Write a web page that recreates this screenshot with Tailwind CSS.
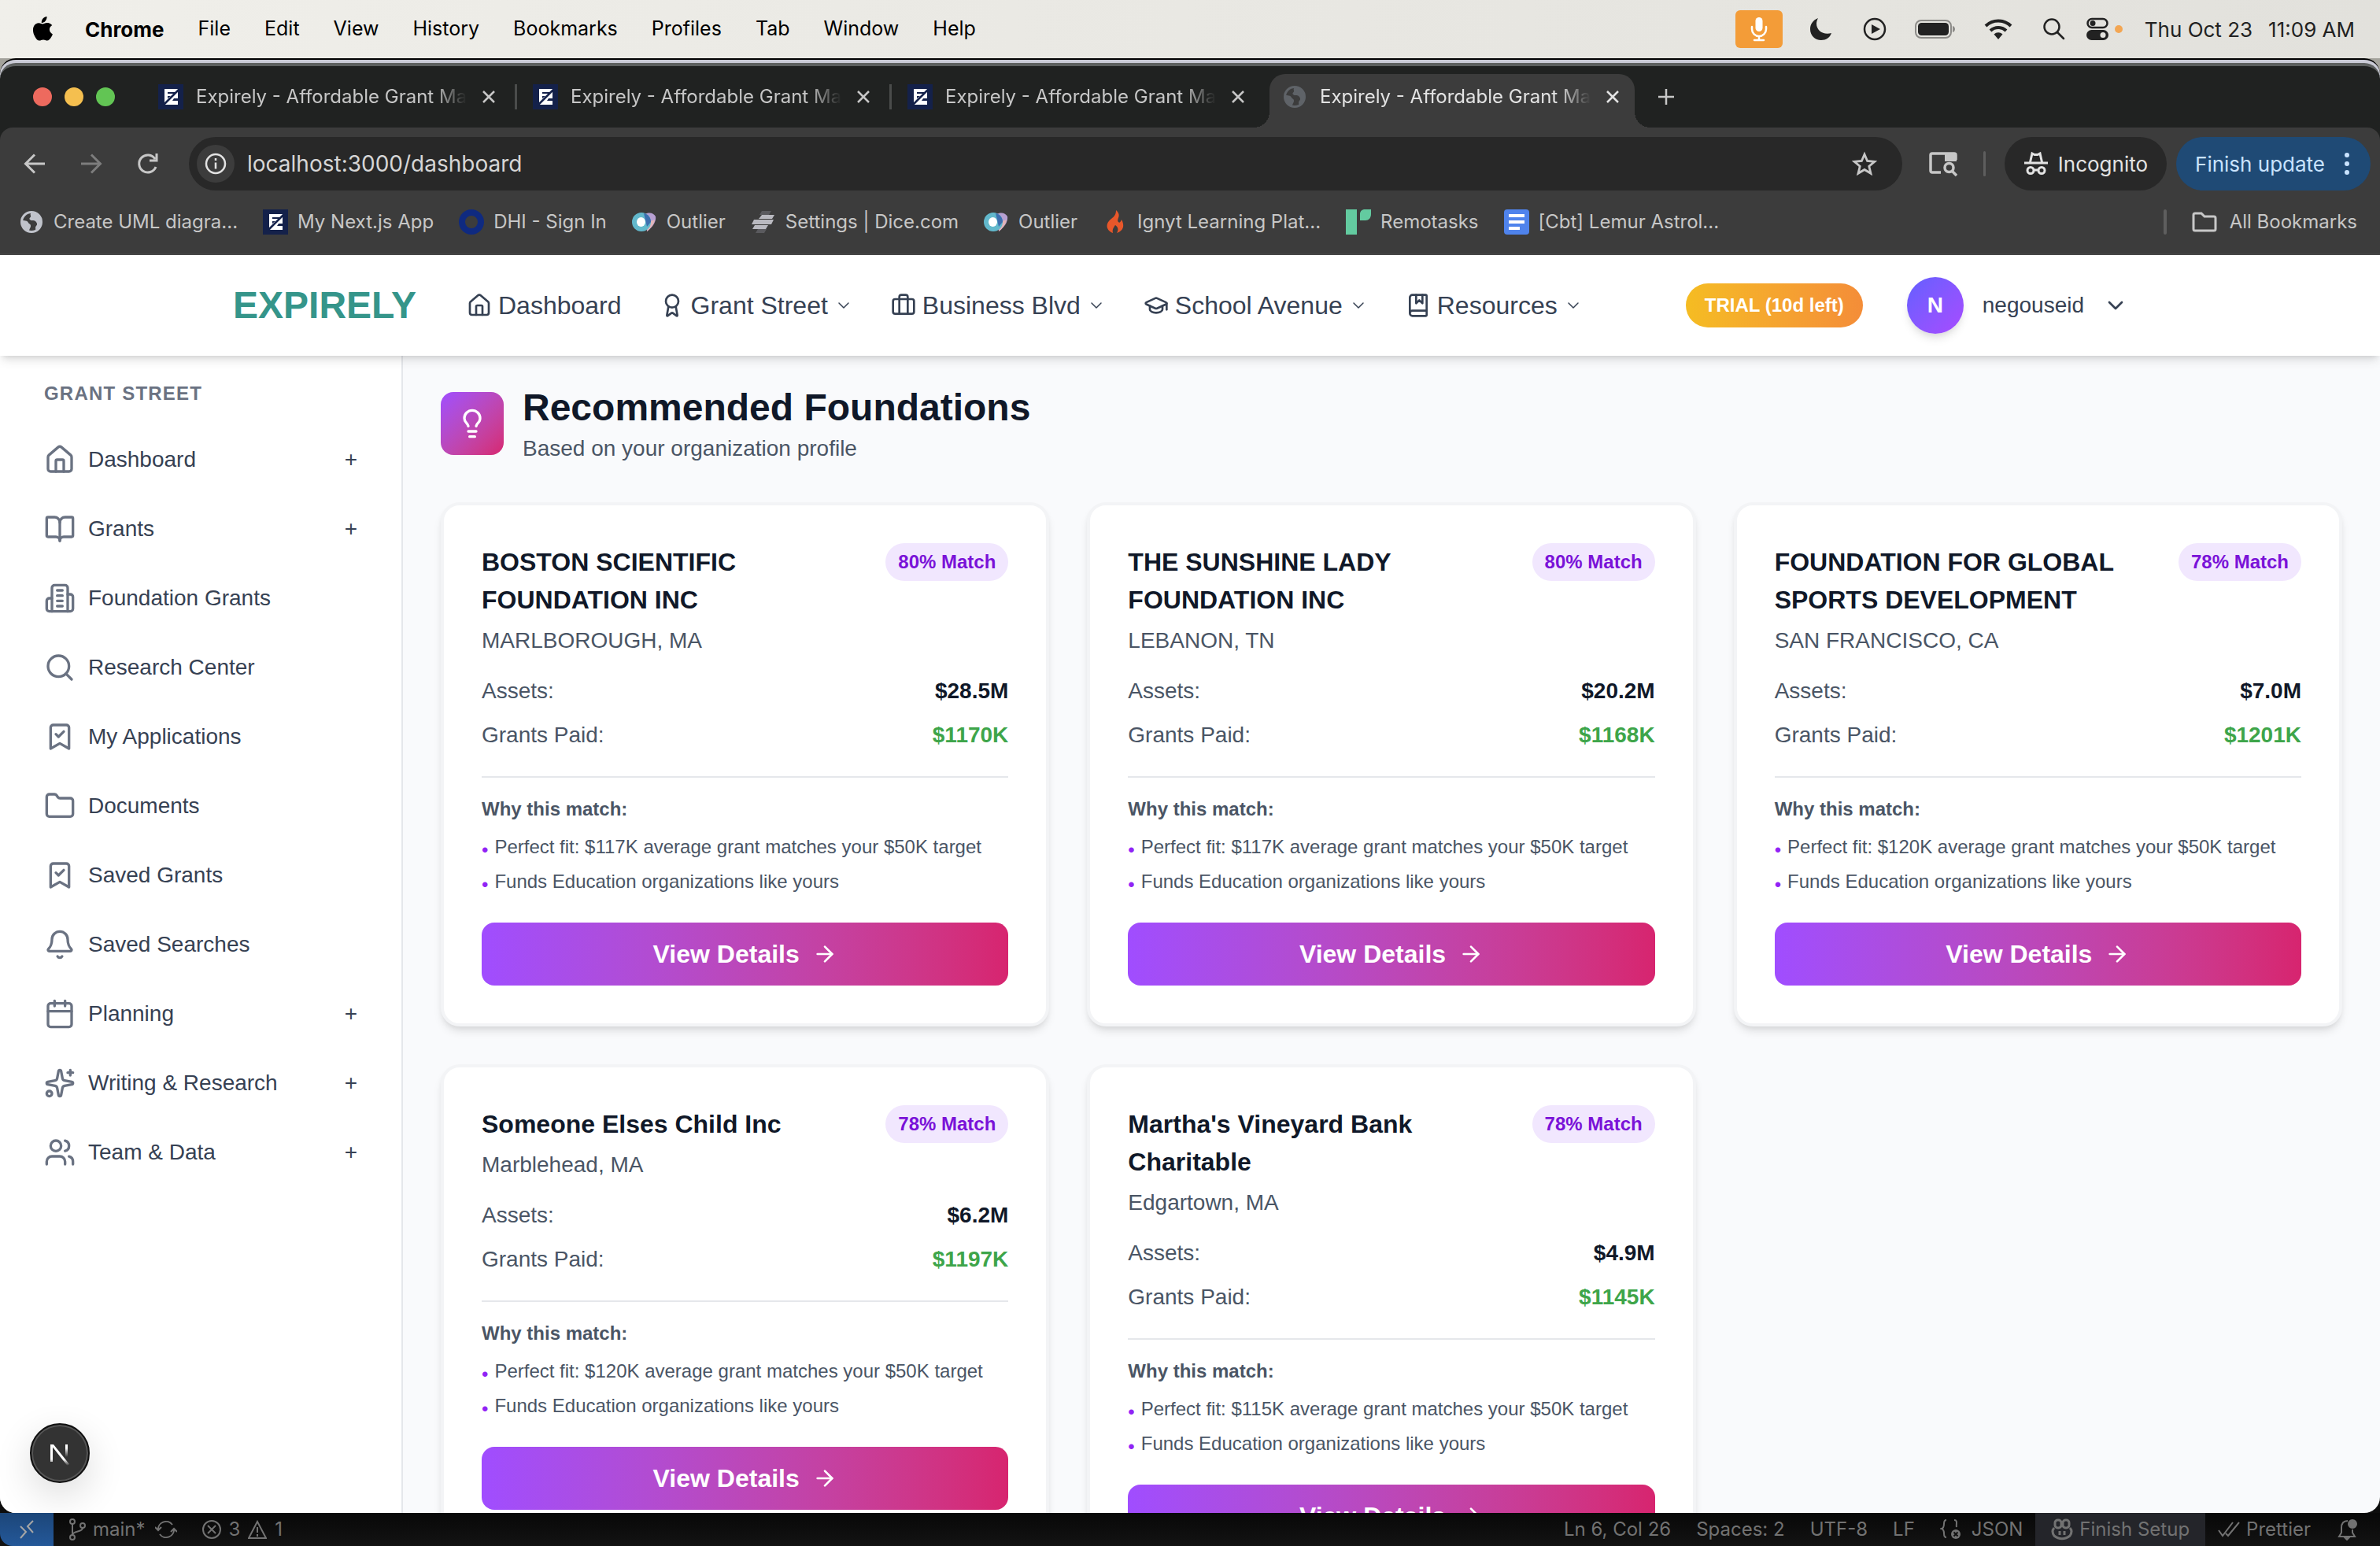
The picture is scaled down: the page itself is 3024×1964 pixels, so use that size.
<!DOCTYPE html>
<html lang="en">
<head>
  <meta charset="UTF-8" />
  <meta name="viewport" content="width=device-width, initial-scale=1.0" />
  <title>Expirely - Affordable Grant Management</title>
  <script src="https://cdn.jsdelivr.net/npm/@tailwindcss/browser@4"></script>
</head>
<body class="h-screen overflow-hidden flex flex-col bg-[#0d0d0d] font-['Liberation_Sans',Arial,sans-serif]">

  <!-- Icon sprite -->
  <svg class="hidden">
    <symbol id="house" viewBox="0 0 24 24"><path d="M15 21v-8a1 1 0 0 0-1-1h-4a1 1 0 0 0-1 1v8"/><path d="M3 10a2 2 0 0 1 .709-1.528l7-5.999a2 2 0 0 1 2.582 0l7 5.999A2 2 0 0 1 21 10v9a2 2 0 0 1-2 2H5a2 2 0 0 1-2-2z"/></symbol>
    <symbol id="book-open" viewBox="0 0 24 24"><path d="M12 7v14"/><path d="M3 18a1 1 0 0 1-1-1V4a1 1 0 0 1 1-1h5a4 4 0 0 1 4 4 4 4 0 0 1 4-4h5a1 1 0 0 1 1 1v13a1 1 0 0 1-1 1h-6a3 3 0 0 0-3 3 3 3 0 0 0-3-3z"/></symbol>
    <symbol id="building" viewBox="0 0 24 24"><path d="M6 22V4a2 2 0 0 1 2-2h8a2 2 0 0 1 2 2v18Z"/><path d="M6 12H4a2 2 0 0 0-2 2v6a2 2 0 0 0 2 2h2"/><path d="M18 9h2a2 2 0 0 1 2 2v9a2 2 0 0 1-2 2h-2"/><path d="M10 6h4M10 10h4M10 14h4M10 18h4"/></symbol>
    <symbol id="search" viewBox="0 0 24 24"><circle cx="11" cy="11" r="8"/><path d="m21 21-4.3-4.3"/></symbol>
    <symbol id="bookmark-check" viewBox="0 0 24 24"><path d="m19 21-7-4-7 4V5a2 2 0 0 1 2-2h10a2 2 0 0 1 2 2Z"/><path d="m9 10 2 2 4-4"/></symbol>
    <symbol id="folder" viewBox="0 0 24 24"><path d="M20 20a2 2 0 0 0 2-2V8a2 2 0 0 0-2-2h-7.9a2 2 0 0 1-1.69-.9L9.6 3.9A2 2 0 0 0 7.93 3H4a2 2 0 0 0-2 2v13a2 2 0 0 0 2 2Z"/></symbol>
    <symbol id="bell" viewBox="0 0 24 24"><path d="M10.268 21a2 2 0 0 0 3.464 0"/><path d="M3.262 15.326A1 1 0 0 0 4 17h16a1 1 0 0 0 .74-1.673C19.41 13.956 18 12.499 18 8A6 6 0 0 0 6 8c0 4.499-1.411 5.956-2.738 7.326"/></symbol>
    <symbol id="calendar" viewBox="0 0 24 24"><path d="M8 2v4M16 2v4M3 10h18"/><rect x="3" y="4" width="18" height="18" rx="2"/></symbol>
    <symbol id="sparkles" viewBox="0 0 24 24"><path d="M11.017 2.814a1 1 0 0 1 1.966 0l1.051 5.558a2 2 0 0 0 1.594 1.594l5.558 1.051a1 1 0 0 1 0 1.966l-5.558 1.051a2 2 0 0 0-1.594 1.594l-1.051 5.558a1 1 0 0 1-1.966 0l-1.051-5.558a2 2 0 0 0-1.594-1.594l-5.558-1.051a1 1 0 0 1 0-1.966l5.558-1.051a2 2 0 0 0 1.594-1.594z"/><path d="M20 2v4M22 4h-4"/><circle cx="4" cy="20" r="2"/></symbol>
    <symbol id="users" viewBox="0 0 24 24"><path d="M16 21v-2a4 4 0 0 0-4-4H6a4 4 0 0 0-4 4v2"/><circle cx="9" cy="7" r="4"/><path d="M22 21v-2a4 4 0 0 0-3-3.87M16 3.13a4 4 0 0 1 0 7.75"/></symbol>
    <symbol id="award" viewBox="0 0 24 24"><path d="m15.477 12.89 1.515 8.526a.5.5 0 0 1-.81.47l-3.58-2.687a1 1 0 0 0-1.197 0l-3.586 2.686a.5.5 0 0 1-.81-.469l1.514-8.526"/><circle cx="12" cy="8" r="6"/></symbol>
    <symbol id="briefcase" viewBox="0 0 24 24"><path d="M16 20V4a2 2 0 0 0-2-2h-4a2 2 0 0 0-2 2v16"/><rect x="2" y="6" width="20" height="14" rx="2"/></symbol>
    <symbol id="graduation" viewBox="0 0 24 24"><path d="M21.42 10.922a1 1 0 0 0-.019-1.838L12.83 5.18a2 2 0 0 0-1.66 0L2.6 9.08a1 1 0 0 0 0 1.832l8.57 3.908a2 2 0 0 0 1.66 0z"/><path d="M22 10v6"/><path d="M6 12.5V16a6 3 0 0 0 12 0v-3.5"/></symbol>
    <symbol id="book-marked" viewBox="0 0 24 24"><path d="M10 2v8l3-3 3 3V2"/><path d="M4 19.5v-15A2.5 2.5 0 0 1 6.5 2H19a1 1 0 0 1 1 1v18a1 1 0 0 1-1 1H6.5a1 1 0 0 1 0-5H20"/></symbol>
    <symbol id="lightbulb" viewBox="0 0 24 24"><path d="M15 14c.2-1 .7-1.7 1.5-2.5 1-.9 1.5-2.2 1.5-3.5A6 6 0 0 0 6 8c0 1 .2 2.2 1.5 3.5.7.7 1.3 1.5 1.5 2.5"/><path d="M9 18h6M10 22h4"/></symbol>
    <symbol id="arrow-right" viewBox="0 0 24 24"><path d="M5 12h14"/><path d="m12 5 7 7-7 7"/></symbol>
    <symbol id="chevron" viewBox="0 0 24 24"><path d="m6 9 6 6 6-6"/></symbol>
    <symbol id="close" viewBox="0 0 24 24"><path d="m5 5 14 14M19 5 5 19"/></symbol>
    <symbol id="expirely" viewBox="0 0 32 32"><path fill="#14214a" stroke="none" d="M0 0h32v32H0z"/><path fill="#fff" stroke="none" d="M8 6h17v20H8z"/><path fill="#14214a" stroke="none" d="M12 10h10l-2 2h-8zM12 15h4l-4 3zM20 18h5v3h-7z"/><path stroke="#14214a" stroke-width="2.500" d="M7 26 26 7"/></symbol>
    <symbol id="globe" viewBox="0 0 32 32"><circle cx="16" cy="16" r="12.500" fill="none" stroke="currentColor" stroke-width="3"/><path fill="currentColor" stroke="none" d="M3 14c4 0 8 0 9 3 1 2 3 1 3 4s-2 3-2 8C7 28 3 22 3 14zM18 3c-3 1-4 3-3 5s-3 3-1 5 5 0 7 2 3 4 1 6 0 4-1 6c6-2 8-7 8-11S25 4 18 3z"/></symbol>
    <symbol id="outlier" viewBox="0 0 32 32"><path fill="#b7a0d2" d="M17 6c5-3 11-1 13 3 1 6-3 13-11 19z"/><path fill="#e2b5b8" d="M29 13c-1 6-5 11-10 15l2-12z"/><ellipse cx="12" cy="16" rx="12" ry="12" fill="#62b8cc"/><path fill="#3d6fb0" d="M15 5c5 1 9 5 9 11l-5 6z"/><ellipse cx="11.500" cy="16" rx="5.500" ry="6" fill="#fff"/></symbol>
  </svg>

  <!-- System menu bar -->
  <div class="h-[74px] shrink-0 flex items-center justify-between pl-10 pr-8 bg-linear-to-r from-[#f0efea] to-[#e2e1dc] text-[25px] text-black font-[Inter,sans-serif]">
    <div class="flex items-center gap-[43px]">
      <div class="flex items-center gap-10">
        <svg class="w-[28px] h-[34px]" viewBox="0 0 28 34" fill="black"><path d="M19.500 1c.3 2.200-.6 4.200-1.900 5.700-1.200 1.400-3 2.400-4.800 2.200-.3-2 .7-4.100 1.800-5.400C15.900 2 17.900 1.100 19.500 1zM26.300 12c-2.300 1.400-3.500 3.200-3.400 5.600.1 2.800 1.700 4.700 4 5.800-.5 1.600-1.300 3-2.200 4.400-1.300 1.900-2.600 3.700-4.700 3.800-2 0-2.700-1.200-5-1.200-2.400 0-3.100 1.200-5 1.200-2.100.1-3.600-2-4.900-3.900C2.400 23.900.6 17.100 3.300 12.800c1.200-2.200 3.500-3.600 6-3.600 2 0 3.800 1.300 5 1.300 1.100 0 3.400-1.600 5.800-1.400 1 0 3.900.4 6.200 2.900z"/></svg>
        <span class="text-[26px] font-bold">Chrome</span>
      </div>
      <span>File</span><span>Edit</span><span>View</span><span>History</span><span>Bookmarks</span><span>Profiles</span><span>Tab</span><span>Window</span><span>Help</span>
    </div>
    <div class="flex items-center text-[#222]">
      <div class="w-[60px] h-12 mr-[34px] rounded-md bg-[#f39c38] flex items-center justify-center">
        <svg class="w-8 h-8" viewBox="0 0 32 32" fill="none" stroke="white" stroke-width="2.500" stroke-linecap="round"><rect x="11.500" y="1" width="9" height="18" rx="4.500" fill="white" stroke="none"/><path d="M7 13v3a9 9 0 0 0 18 0v-3M16 25v5M10 30h12"/></svg>
      </div>
      <svg class="w-[30px] h-[30px] mr-[38px]" viewBox="0 0 30 30" fill="currentColor"><path d="M11 1C4 4 1 9 1 15c0 8 6 14 14 14 6 0 11-3 13-9-10 3-19-3-19-12 0-3 1-5 2-7z"/></svg>
      <svg class="w-[30px] h-[30px] mr-9" viewBox="0 0 30 30" fill="none" stroke="currentColor" stroke-width="2.500"><circle cx="15" cy="15" r="13"/><path fill="currentColor" stroke="none" d="M11 9v12l11-6z"/></svg>
      <svg class="w-[52px] h-6 mr-9" viewBox="0 0 52 24" fill="none"><rect x="1" y="1" width="45" height="22" rx="7" stroke="#8c8b88" stroke-width="2"/><rect x="4" y="4" width="39" height="16" rx="4.500" fill="#222"/><path fill="#8c8b88" d="M48 8c4 1 4 7 0 8z"/></svg>
      <svg class="w-[36px] h-[28px] mr-[38px]" viewBox="0 0 36 28" fill="none" stroke="currentColor" stroke-width="4"><path d="M2 10a23 23 0 0 1 32 0M8 16a14.500 14.500 0 0 1 20 0"/><path fill="currentColor" stroke="none" d="M12.500 20.500a8 8 0 0 1 11 0L18 27z"/></svg>
      <svg class="w-[30px] h-[30px] mr-[26px]" viewBox="0 0 30 30" fill="none" stroke="currentColor" stroke-width="2.500" stroke-linecap="round"><circle cx="12" cy="12" r="9.500"/><path d="m19 19 8 8"/></svg>
      <svg class="w-[28px] h-[30px] mr-2" viewBox="0 0 28 30"><rect x="1.500" y="2" width="25" height="11" rx="5.500" fill="none" stroke="currentColor" stroke-width="2.500"/><circle cx="8" cy="7.500" r="3.500" fill="currentColor"/><rect y="16" width="28" height="13" rx="6.500" fill="currentColor"/><circle cx="21" cy="22.500" r="3.500" fill="#e3e2dd"/></svg>
      <span class="w-[10px] h-[10px] mr-7 rounded-full bg-[#f3a653]"></span>
      <span class="flex gap-5 text-[26px]"><span>Thu Oct 23</span><span>11:09 AM</span></span>
    </div>
  </div>

  <!-- Browser window -->
  <div class="flex-1 min-h-0 flex flex-col">
    <div class="bg-[#a3a29b]">
      <div class="rounded-t-[20px] border-t-2 border-black bg-[#c9cad5] pt-1">
        <div class="h-[82px] rounded-t-[20px] border-t-4 border-[#5d605f] bg-[#202221] flex items-end pl-[42px] font-[Inter,sans-serif] text-2xl text-[#c7c7c7]">
          <div class="h-[78px] w-[143px] shrink-0 flex gap-4 items-center">
            <span class="w-6 h-6 rounded-full bg-[#ed6a5e]"></span>
            <span class="w-6 h-6 rounded-full bg-[#f5bf4f]"></span>
            <span class="w-6 h-6 rounded-full bg-[#62c554]"></span>
          </div>
          <div id="tabs" class="flex h-[78px] items-end"></div>
          <button aria-label="New tab" class="h-[78px] ml-6 flex items-center">
            <svg class="w-8 h-8" viewBox="0 0 32 32" stroke="#c7c7c7" stroke-width="2.500"><path d="M16 6v20M6 16h20"/></svg>
          </button>
        </div>
      </div>
    </div>

    <!-- Toolbar -->
    <div class="bg-[#202221]">
      <div class="h-[92px] rounded-t-[16px] bg-[#3c3c3c] flex items-center px-3 font-[Inter,sans-serif] text-[26px] text-[#c7c7c7]">
        <div class="flex items-center gap-10 pl-4 pr-9 text-[#c7c7c7]">
          <button aria-label="Back"><svg class="w-8 h-8" viewBox="0 0 32 32" fill="none" stroke="currentColor" stroke-width="3"><path d="M29 16H5M16 4.500 4.500 16 16 27.500"/></svg></button>
          <button aria-label="Forward"><svg class="w-8 h-8" viewBox="0 0 32 32" fill="none" stroke="#7d7d7d" stroke-width="3"><path d="M3 16h24M16 4.500 27.500 16 16 27.500"/></svg></button>
          <button aria-label="Reload"><svg class="w-8 h-8" viewBox="0 0 32 32" fill="none" stroke="currentColor" stroke-width="3"><path d="M26 20a11 11 0 1 1-1-10M27 3v9h-9"/></svg></button>
        </div>
        <div class="flex-1 h-[68px] rounded-full bg-[#282828] flex items-center pl-[10px] pr-8">
          <span class="w-12 h-12 rounded-full bg-[#3c3c3c] flex items-center justify-center">
            <svg class="w-7 h-7" viewBox="0 0 28 28" fill="none" stroke="#e3e3e3" stroke-width="2.500"><circle cx="14" cy="14" r="12"/><path d="M14 12.500v8M14 7v3"/></svg>
          </span>
          <input aria-label="Address" value="localhost:3000/dashboard" class="flex-1 ml-4 text-[28px] text-[#d6d6d6] outline-none" />
          <svg class="w-8 h-8" viewBox="0 0 32 32" fill="none" stroke="currentColor" stroke-width="2.800"><path d="m16 4 3.600 8.500 9.200.8-7 6 2.200 9L16 23.500l-8 4.800 2.200-9-7-6 9.200-.8z"/></svg>
        </div>
        <svg class="w-9 h-9 ml-[34px]" viewBox="0 0 36 36" fill="none" stroke="currentColor" stroke-width="3.500"><path d="M15 29H4a2 2 0 0 1-2-2V7a2 2 0 0 1 2-2h28a2 2 0 0 1 2 2v6"/><path fill="currentColor" stroke="none" d="M20 4h15v11H20z"/><circle cx="25.500" cy="23" r="5.500"/><path d="m29 27 6 6"/></svg>
        <span class="w-[3px] h-8 ml-[33px] mr-6 bg-[#5e5e5e] rounded-full"></span>
        <button class="h-[68px] rounded-full bg-[#282828] text-[#e3e3e3] flex items-center gap-3 px-6">
          <svg class="w-8 h-8" viewBox="0 0 32 32" fill="none" stroke="currentColor" stroke-width="3"><path d="M1 15h30M8.500 14l2.500-11 3 1.500h4L21 3l2.500 11"/><circle cx="9" cy="24.500" r="4"/><circle cx="23" cy="24.500" r="4"/><path d="M13 24h6"/></svg>
          Incognito
        </button>
        <button class="h-[68px] ml-3 rounded-full bg-[#1f4a75] text-[#c9e3ff] flex items-center gap-6 pl-6 pr-[26px]">
          Finish update
          <svg class="w-2 h-8" viewBox="0 0 8 32" fill="currentColor"><circle cx="4" cy="5" r="3"/><circle cx="4" cy="16" r="3"/><circle cx="4" cy="27" r="3"/></svg>
        </button>
      </div>
    </div>

    <!-- Bookmarks -->
    <div class="h-[70px] shrink-0 bg-[#3c3c3c] border-b-2 border-[#454545] flex items-start pt-3 justify-between pl-6 pr-[29px] font-[Inter,sans-serif] text-2xl leading-8 text-[#c7c7c7]">
      <div class="flex gap-8">
        <a href="#" class="flex gap-3"><svg class="w-8 h-8 text-[#c0c3cb]"><use href="#globe"/></svg>Create UML diagra...</a>
        <a href="#" class="flex gap-3"><svg class="w-8 h-8"><use href="#expirely"/></svg>My Next.js App</a>
        <a href="#" class="flex gap-3"><span class="w-8 h-8 rounded-full border-8 border-[#0f2a80]"></span>DHI - Sign In</a>
        <a href="#" class="flex gap-3"><svg class="w-8 h-8"><use href="#outlier"/></svg>Outlier</a>
        <a href="#" class="flex gap-3"><svg class="w-8 h-8" viewBox="0 0 32 32" fill="#b9b9c0"><path fill="#5a5a5e" d="M14 2h12l-3 5H11zM9 25h11l-3 5H6z"/><path d="M14 7h16l-3 5H10zM4 13h25l-3 6H1zM5 20h17l-3 5H2z"/></svg>Settings | Dice.com</a>
        <a href="#" class="flex gap-3"><svg class="w-8 h-8"><use href="#outlier"/></svg>Outlier</a>
        <a href="#" class="flex gap-3"><svg class="w-8 h-8" viewBox="0 0 32 32" fill="#e8572a"><path d="M17 1c8 7 0 11 3 15 2 2 3-1 4-3 4 7 3 14-6 17 3-5 1-8-2-10-2 3-4 5-3 10C3 26 4 17 11 12c4-3 6-6 6-11z"/></svg>Ignyt Learning Plat...</a>
        <a href="#" class="flex gap-3"><svg class="w-8 h-8" viewBox="0 0 32 32" fill="#63cba0"><path d="M0 0h14v32H0zM18 14V6c0-4 3-6 6-6h8v6c0 5-3 8-7 8z"/></svg>Remotasks</a>
        <a href="#" class="flex gap-3"><svg class="w-8 h-8" viewBox="0 0 32 32"><rect width="32" height="32" rx="4" fill="#4f83ec"/><path fill="#fff" d="M6 6h20v4H6zM6 14h20v4H6zM6 22h14v4H6z"/></svg>[Cbt] Lemur Astrol...</a>
      </div>
      <div class="flex gap-8">
        <span class="w-1 h-8 rounded-full bg-[#5e5e5e]"></span>
        <a href="#" class="flex gap-4"><svg class="w-8 h-8" viewBox="0 0 32 32" fill="none" stroke="currentColor" stroke-width="3"><path d="M2 7a2 2 0 0 1 2-2h8l4 4h12a2 2 0 0 1 2 2v14a2 2 0 0 1-2 2H4a2 2 0 0 1-2-2z"/></svg>All Bookmarks</a>
      </div>
    </div>

    <!-- Page -->
    <div class="relative flex-1 min-h-0 flex flex-col overflow-hidden rounded-b-[20px] bg-[#f9fafc]">
      <header class="relative z-10 shrink-0 bg-white shadow-[0_8px_12px_-2px_rgba(0,0,0,0.1),0_4px_8px_-4px_rgba(0,0,0,0.15)]">
        <div class="max-w-[2560px] mx-auto px-16 h-32 flex items-center justify-between">
          <div class="flex items-center gap-16">
            <a href="#" class="text-5xl font-bold text-[#35958a]">EXPIRELY</a>
            <nav id="topnav" class="flex items-center gap-12 text-[32px] text-[#364153]"></nav>
          </div>
          <div class="flex items-center gap-14">
            <span class="h-14 px-6 rounded-full flex items-center text-2xl font-bold text-white bg-linear-to-r from-[#f5bc22] to-[#f48d38]">TRIAL (10d left)</span>
            <button class="flex items-center gap-6 pr-6 text-[28px] text-[#364153]">
              <span class="w-18 h-18 rounded-full flex items-center justify-center font-bold text-white bg-linear-to-br from-[#625fff] to-[#a74aff] shadow-[0_8px_12px_-2px_rgba(0,0,0,0.1),0_4px_8px_-4px_rgba(0,0,0,0.1)]">N</span>
              negouseid
              <svg class="w-8 h-8" fill="none" stroke="currentColor" stroke-width="2" stroke-linecap="round" stroke-linejoin="round"><use href="#chevron"/></svg>
            </button>
          </div>
        </div>
      </header>

      <div class="flex-1 min-h-0 flex">
        <aside class="w-[512px] shrink-0 bg-white border-r-2 border-[#e5e7eb] px-8 pt-8">
          <h2 class="px-6 leading-8 text-2xl font-bold tracking-wider text-[#6a7282]">GRANT STREET</h2>
          <ul id="sidenav" class="mt-6 text-[28px] text-[#364153]"></ul>
        </aside>

        <main class="flex-1 min-w-0 overflow-hidden px-12 pt-[34px]">
          <div class="flex items-center gap-6">
            <span class="w-20 h-20 rounded-2xl flex items-center justify-center text-white bg-linear-to-br from-[#a04dff] to-[#d7246f]">
              <svg class="w-10 h-10" fill="none" stroke="currentColor" stroke-width="2" stroke-linecap="round" stroke-linejoin="round"><use href="#lightbulb"/></svg>
            </span>
            <div>
              <h1 class="text-5xl leading-16 font-bold text-[#101828]">Recommended Foundations</h1>
              <p class="text-[28px] leading-10 text-[#4a5565]">Based on your organization profile</p>
            </div>
          </div>
          <div id="cards" class="mt-12 grid grid-cols-3 gap-12 items-start"></div>
        </main>
      </div>

      <button aria-label="Open Next.js Dev Tools" class="absolute left-[38px] bottom-[38px] w-[76px] h-[76px] rounded-full bg-[#333] border-2 border-[#111] ring-2 ring-inset ring-[#555] shadow-[0_16px_48px_rgba(0,0,0,0.14)] flex items-center justify-center">
        <svg class="w-8 h-8" viewBox="0 0 32 32" fill="none" stroke-width="3">
          <defs>
            <linearGradient id="stem" x1="0" y1="0" x2="0" y2="1"><stop offset="0.300" stop-color="#fff"/><stop offset="1" stop-color="#fff" stop-opacity="0"/></linearGradient>
            <linearGradient id="diag" x1="0" y1="0" x2="0" y2="1"><stop offset="0.700" stop-color="#fff"/><stop offset="1" stop-color="#fff" stop-opacity="0"/></linearGradient>
          </defs>
          <path fill="url(#diag)" d="M4 5h4l20 25-2.500 2L7 8.500V27H4z"/><path fill="url(#stem)" d="M23 5h3v16h-3z"/>
        </svg>
      </button>
    </div>
  </div>

  <!-- Editor status bar -->
  <div class="h-[42px] shrink-0 flex justify-between items-stretch bg-linear-to-b from-[#080808] to-[#131313] font-[Inter,sans-serif] text-2xl text-[#727272]">
    <div class="flex items-center">
      <span class="w-[68px] h-full rounded-bl-[16px] bg-linear-to-b from-[#1c4679] to-[#245899] flex items-center justify-center">
        <svg class="w-6 h-6" viewBox="0 0 24 24" fill="none" stroke="#a6a6a6" stroke-width="2"><path d="m4 8 7 7-7 8M20 1l-7 7 7 8"/></svg>
      </span>
      <svg class="w-6 h-7 ml-[18px] mr-2" viewBox="0 0 24 28" fill="none" stroke="currentColor" stroke-width="2"><circle cx="6" cy="4" r="3"/><circle cx="19" cy="9" r="3"/><circle cx="6" cy="24" r="3"/><path d="M6 7v14M19 12c0 6-12 3-13 9"/></svg>
      <span>main*</span>
      <svg class="w-7 h-7 ml-3" viewBox="0 0 28 28" fill="none" stroke="currentColor" stroke-width="2"><path d="M4 15A10 10 0 0 1 22 8M24 13a10 10 0 0 1-18 7M0 11l4 4 4-4M28 17l-4-4-4 4"/></svg>
      <svg class="w-6 h-6 ml-8 mr-[10px]" viewBox="0 0 24 24" fill="none" stroke="currentColor" stroke-width="2"><circle cx="12" cy="12" r="11"/><path d="m7 7 10 10M17 7 7 17"/></svg>
      <span>3</span>
      <svg class="w-6 h-6 mx-[10px]" viewBox="0 0 24 24" fill="none" stroke="currentColor" stroke-width="2"><path d="M12 2 1 23h22zM12 9v7M12 18v3"/></svg>
      <span>1</span>
    </div>
    <div class="flex items-center gap-8 pr-7">
      <span>Ln 6, Col 26</span>
      <span>Spaces: 2</span>
      <span>UTF-8</span>
      <span>LF</span>
      <span class="flex items-center gap-3">
        <svg class="w-7 h-7" viewBox="0 0 28 28" fill="none" stroke="currentColor" stroke-width="2"><path d="M8 2C2 2 8 11 2 13c6 2 0 11 6 11M18 2c5 0 2 6 3 9"/><circle cx="20" cy="20" r="6" fill="currentColor" stroke="none"/><path stroke="#111" d="m17.500 17.500 5 5M22.500 17.500l-5 5"/></svg>
        JSON
      </span>
      <span class="-mx-4 h-full px-5 flex items-center gap-2 bg-[#24252a]">
        <svg class="w-7 h-7" viewBox="0 0 28 28" fill="none" stroke="currentColor" stroke-width="3"><rect x="5" y="2" width="8" height="10" rx="3.500"/><rect x="15" y="2" width="8" height="10" rx="3.500"/><path d="M4 12c-3 3-2 7 0 10 6 5 14 5 20 0 2-3 3-7 0-10M11 16v5M17 16v5"/></svg>
        Finish Setup
      </span>
      <span class="flex items-center gap-2">
        <svg class="w-7 h-6" viewBox="0 0 28 24" fill="none" stroke="currentColor" stroke-width="2"><path d="m1 13 5 7L19 3M10 17l3 3L27 3"/></svg>
        Prettier
      </span>
      <svg class="w-7 h-7" viewBox="0 0 28 28" fill="none" stroke="currentColor" stroke-width="2"><path d="M15 3c-6 0-8 4-8 9v6l-3 5h20l-3-5v-4"/><path fill="currentColor" d="M11 24h6l-3 3z"/><circle cx="21" cy="7" r="5" fill="currentColor"/></svg>
    </div>
  </div>

  <script>
    const tabs = [false, false, false, true];
    document.getElementById("tabs").innerHTML = tabs.map((active, i) => `
      ${i ? `<span class="w-3 h-[78px] flex items-center justify-center"><span class="${active ? "hidden" : "w-[3px] h-8 bg-[#4a4c4b]"}"></span></span>` : ""}
      <div class="${active ? "relative w-[464px] h-[68px] pb-[10px] rounded-t-[20px] bg-[#3c3c3c] text-[#e3e3e3] flex items-center pl-4 pr-5" : "w-[464px] h-[78px] flex items-center pl-4 pr-5"}">
        ${active ? `
        <span class="absolute -left-5 bottom-0 w-5 h-5 bg-[radial-gradient(circle_at_top_left,transparent_20px,#3c3c3c_20px)]"></span>
        <span class="absolute -right-5 bottom-0 w-5 h-5 bg-[radial-gradient(circle_at_top_right,transparent_20px,#3c3c3c_20px)]"></span>` : ""}
        <svg class="w-8 h-8 shrink-0 text-[#5f6368]"><use href="${active ? "#globe" : "#expirely"}"/></svg>
        <span class="flex-1 ml-4 whitespace-nowrap mask-r-from-88% mask-r-to-100%">Expirely - Affordable Grant Ma</span>
        <button aria-label="Close tab" class="ml-4 flex"><svg class="w-6 h-6" fill="none" stroke="currentColor" stroke-width="2.500"><use href="#close"/></svg></button>
      </div>`).join("");

    const topnav = [
      ["house", "Dashboard"],
      ["award", "Grant Street"],
      ["briefcase", "Business Blvd"],
      ["graduation", "School Avenue"],
      ["book-marked", "Resources"],
    ];
    document.getElementById("topnav").innerHTML = topnav.map(([icon, label], i) => `
      <a href="#" class="flex items-center gap-2 whitespace-nowrap">
        <svg class="w-8 h-8" fill="none" stroke="currentColor" stroke-width="2" stroke-linecap="round" stroke-linejoin="round"><use href="#${icon}"/></svg>
        ${label}
        ${i ? `<svg class="w-6 h-6" fill="none" stroke="currentColor" stroke-width="1.500" stroke-linecap="round" stroke-linejoin="round"><use href="#chevron"/></svg>` : ""}
      </a>`).join("");

    const sidenav = [
      ["house", "Dashboard", true],
      ["book-open", "Grants", true],
      ["building", "Foundation Grants"],
      ["search", "Research Center"],
      ["bookmark-check", "My Applications"],
      ["folder", "Documents"],
      ["bookmark-check", "Saved Grants"],
      ["bell", "Saved Searches"],
      ["calendar", "Planning", true],
      ["sparkles", "Writing &amp; Research", true],
      ["users", "Team &amp; Data", true],
    ];
    document.getElementById("sidenav").innerHTML = sidenav.map(([icon, label, more]) => `
      <li>
        <a href="#" class="h-22 px-6 flex items-center gap-4">
          <svg class="w-10 h-10 text-[#6a7282]" fill="none" stroke="currentColor" stroke-width="2" stroke-linecap="round" stroke-linejoin="round"><use href="#${icon}"/></svg>
          <span class="flex-1">${label}</span>
          ${more ? "<span>+</span>" : ""}
        </a>
      </li>`).join("");

    const foundations = [
      { name: "BOSTON SCIENTIFIC FOUNDATION INC", place: "MARLBOROUGH, MA", match: 80, assets: "$28.5M", paid: "$1170K", avg: "$117K" },
      { name: "THE SUNSHINE LADY FOUNDATION INC", place: "LEBANON, TN", match: 80, assets: "$20.2M", paid: "$1168K", avg: "$117K" },
      { name: "FOUNDATION FOR GLOBAL SPORTS DEVELOPMENT", place: "SAN FRANCISCO, CA", match: 78, assets: "$7.0M", paid: "$1201K", avg: "$120K" },
      { name: "Someone Elses Child Inc", place: "Marblehead, MA", match: 78, assets: "$6.2M", paid: "$1197K", avg: "$120K" },
      { name: "Martha's Vineyard Bank Charitable", place: "Edgartown, MA", match: 78, assets: "$4.9M", paid: "$1145K", avg: "$115K" },
    ];
    document.getElementById("cards").innerHTML = foundations.map((f) => `
      <article class="bg-white border-4 border-[#f3f4f6] rounded-[24px] p-12 text-[28px] leading-10 text-[#4a5565] shadow-[0_8px_12px_-2px_rgba(0,0,0,0.1),0_4px_8px_-4px_rgba(0,0,0,0.1)]">
        <div class="flex items-start gap-4">
          <div class="flex-1">
            <h3 class="text-[32px] leading-12 font-bold text-[#101828]">${f.name}</h3>
            <p class="mt-2">${f.place}</p>
          </div>
          <span class="h-12 px-4 rounded-full bg-[#f1e7fe] text-2xl leading-12 font-bold text-[#7a12d8] whitespace-nowrap">${f.match}% Match</span>
        </div>
        <dl class="mt-6 space-y-4">
          <div class="flex justify-between"><dt>Assets:</dt><dd class="font-bold text-[#101828]">${f.assets}</dd></div>
          <div class="flex justify-between"><dt>Grants Paid:</dt><dd class="font-bold text-[#3ea54a]">${f.paid}</dd></div>
        </dl>
        <div class="mt-8 pt-6 border-t-2 border-[#e5e7eb] text-2xl leading-8">
          <p class="font-bold">Why this match:</p>
          <ul class="mt-4 space-y-3">
            <li class="flex gap-2"><span class="mt-1 leading-8 h-7 text-[#9123f5]">•</span>Perfect fit: ${f.avg} average grant matches your $50K target</li>
            <li class="flex gap-2"><span class="mt-1 leading-8 h-7 text-[#9123f5]">•</span>Funds Education organizations like yours</li>
          </ul>
        </div>
        <button class="mt-9 w-full h-20 rounded-2xl flex items-center justify-center gap-4 text-[32px] font-bold text-white bg-linear-to-r from-[#a04dff] to-[#d7246f]">
          View Details
          <svg class="w-8 h-8" fill="none" stroke="currentColor" stroke-width="2" stroke-linecap="round" stroke-linejoin="round"><use href="#arrow-right"/></svg>
        </button>
      </article>`).join("");
  </script>
</body>
</html>
